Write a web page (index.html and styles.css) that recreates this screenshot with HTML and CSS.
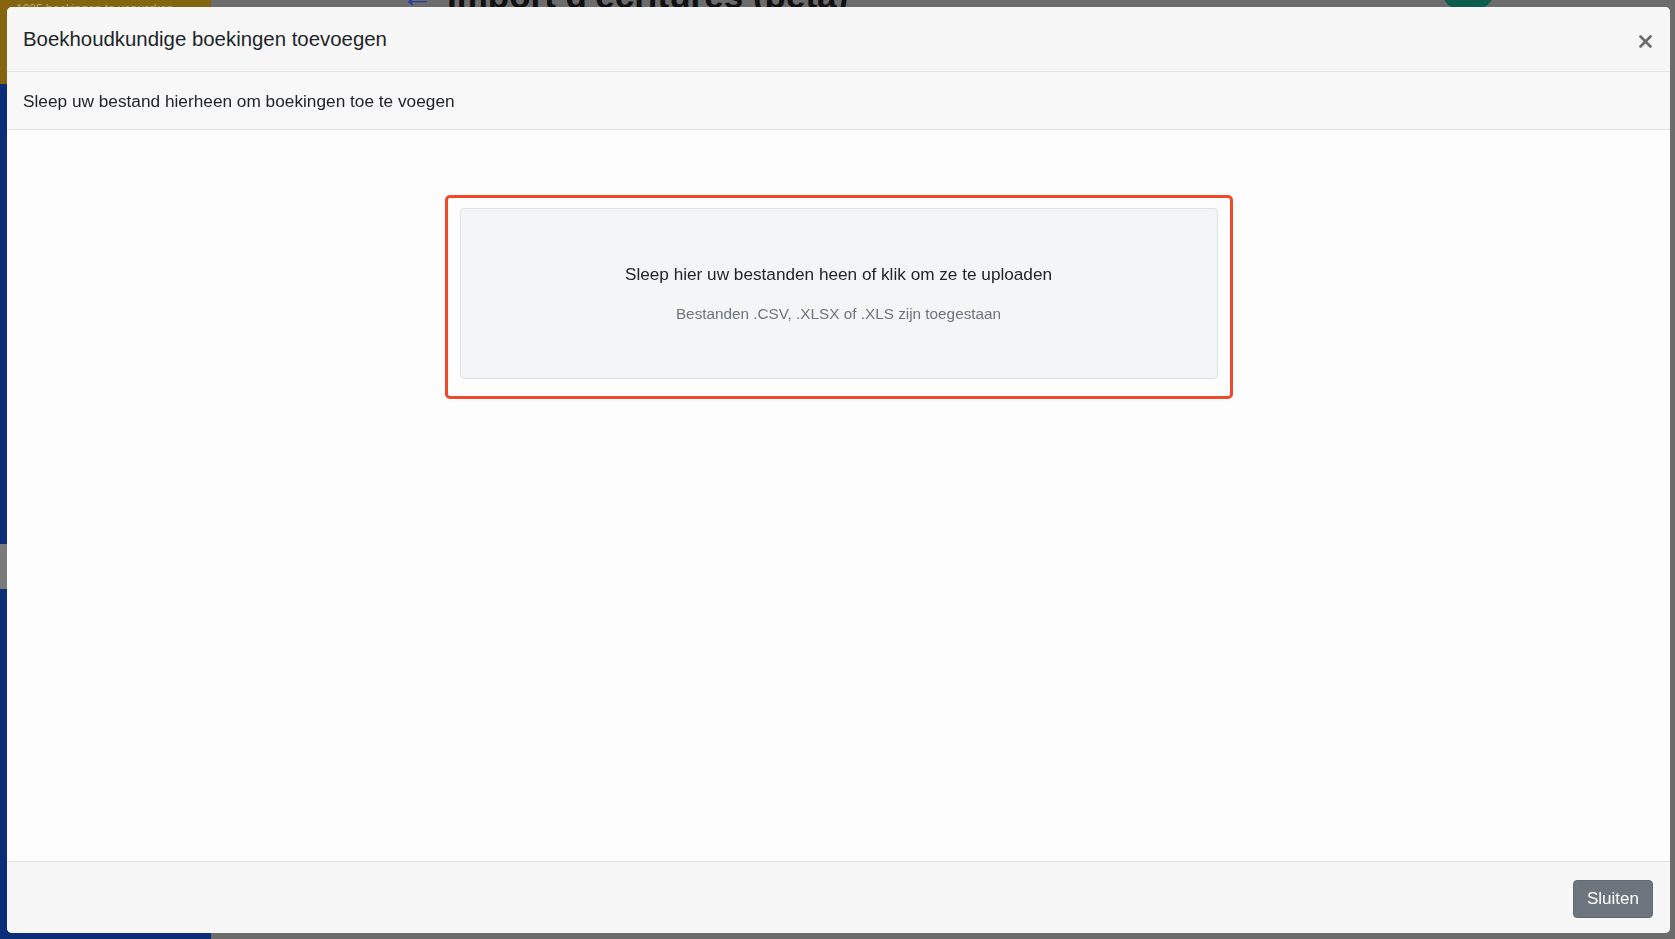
FILE: index.html
```html
<!DOCTYPE html>
<html lang="nl">
  <head>
    <meta charset="UTF-8" />
    <meta name="viewport" content="width=device-width, initial-scale=1.0" />
    <title>Boekhoudkundige boekingen toevoegen</title>
    <link rel="stylesheet" href="styles.css">
  </head>

  <body>
    <!-- app achter de modal (gedimd) -->
    <div class="app">
      <div class="sidebar">
        <div class="sidebar-top">1035 boekingen te verwerken</div>
        <div class="sidebar-menu">
          <div class="menu-item"></div>
          <div class="menu-item active"></div>
        </div>
      </div>
      <div class="main">
        <div class="page-head">
          <span class="back">&larr;</span>
          <h1>Import d'écritures (beta)</h1>
          <span class="round-btn"></span>
        </div>
      </div>
    </div>

    <div class="modal">
      <div class="modal-header">
        <h5>Boekhoudkundige boekingen toevoegen</h5>
        <button class="close" aria-label="Sluiten">
          <svg width="13" height="13" viewBox="0 0 13 13">
            <path d="M1.5 1.5 L11.5 11.5 M11.5 1.5 L1.5 11.5" stroke="#6a6a6a" stroke-width="2.6" stroke-linecap="round" />
          </svg>
        </button>
      </div>
      <div class="modal-sub">
        <p>Sleep uw bestand hierheen om boekingen toe te voegen</p>
      </div>
      <div class="modal-body">
        <div class="highlight">
          <div class="dropzone">
            <p class="dz-title">Sleep hier uw bestanden heen of klik om ze te uploaden</p>
            <p class="dz-hint">Bestanden .CSV, .XLSX of .XLS zijn toegestaan</p>
          </div>
        </div>
      </div>
      <div class="modal-footer">
        <button class="btn-secondary">Sluiten</button>
      </div>
    </div>
  </body>
</html>
```

FILE: styles.css
```css
body {
  margin: 0;
  height: 939px;
  overflow: hidden;
  font-family: "Liberation Sans", Arial, sans-serif;
  color: #212529;
}

.app {
  display: flex;
  height: 100%;
  background-color: #6c6c6c;
}
.sidebar {
  width: 211px;
  display: flex;
  flex-direction: column;
  background-color: #0c2d78;
}
.sidebar-top {
  height: 80px;
  background-color: #85640f;
  color: #b9a56e;
  font-size: 12px;
  padding: 2px 16px;
}
.sidebar-menu {
  padding-top: 460px;
}
.menu-item {
  height: 45px;
}
.menu-item.active {
  background-color: #7a7a7a;
  margin-top: -45px;
}
.main {
  flex: 1;
}
.page-head {
  display: flex;
  align-items: center;
  margin-top: -24px;
  padding-left: 190px;
}
.back {
  color: #1d3fa0;
  font-size: 32px;
  margin-right: 14px;
}
.page-head h1 {
  margin: 0;
  font-size: 35px;
  color: #111;
}
.round-btn {
  width: 56px;
  height: 56px;
  border-radius: 50%;
  background-color: #0d5d4d;
  margin-left: auto;
  margin-right: 179px;
  margin-top: -22px;
}

/* modal */
.modal {
  position: fixed;
  top: 7px;
  left: 7px;
  right: 5px;
  bottom: 6px;
  display: flex;
  flex-direction: column;
  background-color: #fdfdfd;
  border-radius: 5px;
  overflow: hidden;
}
.modal-header {
  height: 64px;
  display: flex;
  align-items: center;
  justify-content: space-between;
  padding: 0 16px;
  background-color: #f7f7f7;
  border-bottom: 1px solid #e0e2e5;
}
.modal-header h5 {
  margin: 0;
  font-size: 20.4px;
  font-weight: normal;
}
.close {
  border: 0;
  background: none;
  padding: 0;
  margin-right: 2px;
  margin-top: 4px;
  display: flex;
}
.modal-sub {
  height: 57px;
  display: flex;
  align-items: center;
  padding: 0 16px;
  background-color: #f8f8f8;
  border-bottom: 1px solid #e0e2e5;
}
.modal-sub p {
  margin: 1px 0 0 0;
  font-size: 17.25px;
}
.modal-body {
  flex: 1;
  display: flex;
  justify-content: center;
  align-items: flex-start;
  padding-top: 65px;
}
.highlight {
  width: 758px;
  padding: 10px 12px 17px 12px;
  border: 3px solid #f2472a;
  border-radius: 5px;
}
.dropzone {
  height: 169px;
  display: flex;
  flex-direction: column;
  justify-content: center;
  align-items: center;
  background-color: #f4f5f6;
  border: 1px solid #dde1e5;
  border-radius: 4px;
}
.dz-title {
  margin: 0 0 20px 0;
  font-size: 17.2px;
}
.dz-hint {
  margin: 0;
  font-size: 15.3px;
  color: #6c757d;
}
.modal-footer {
  height: 71px;
  display: flex;
  align-items: center;
  justify-content: flex-end;
  padding: 0 17px;
  background-color: #f7f7f7;
  border-top: 1px solid #dee1e4;
}
.btn-secondary {
  width: 80px;
  height: 38px;
  border: 1px solid #616a72;
  border-radius: 4px;
  background-color: #6c757d;
  color: #fff;
  font-family: "Liberation Sans", Arial, sans-serif;
  font-size: 17px;
  margin-top: 2px;
}
```
